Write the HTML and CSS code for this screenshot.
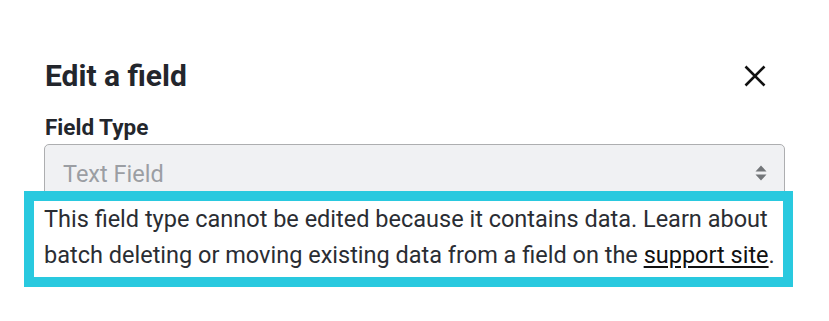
FILE: index.html
```
<!DOCTYPE html>
<html lang="en">
<head>
<meta charset="utf-8">
<title>Edit a field</title>
<link rel="stylesheet" href="styles.css">
</head>
<body>
<div class="modal">
  <div class="modal-header">
    <h2 class="modal-title">Edit a field</h2>
    <button class="close-btn" aria-label="Close">
      <svg width="22" height="22" viewBox="0 0 22 22"><path d="M1.5 1.5 L20.5 20.5 M20.5 1.5 L1.5 20.5" stroke="#111" stroke-width="2.6" stroke-linecap="butt" fill="none"/></svg>
    </button>
  </div>
  <label class="field-label">Field Type</label>
  <div class="select">
    <span class="select-value">Text Field</span>
    <svg class="select-arrows" width="12" height="16" viewBox="0 0 12 16"><path d="M6 0.5 L11.5 6.5 L0.5 6.5 Z M0.5 9.5 L11.5 9.5 L6 15.5 Z" fill="#737679"/></svg>
  </div>
  <p class="help">This field type cannot be edited because it contains data. Learn about batch deleting or moving existing data from a field on the <a href="#">support site</a>.</p>
</div>
</body>
</html>
```
FILE: styles.css
```
html, body {
  margin: 0;
  padding: 0;
  background: #ffffff;
}
body {
  font-family: Roboto, "Liberation Sans", sans-serif;
  color: #2a2d33;
}
.modal {
  width: 741px;
  padding: 58px 0 0 44px;
}
.modal-header {
  display: flex;
  align-items: center;
  justify-content: space-between;
  margin-left: 1px;
}
.modal-title {
  margin: 0;
  font-size: 30px;
  font-weight: 700;
  line-height: 36px;
  color: #23262c;
}
.close-btn {
  border: 0;
  background: none;
  padding: 0;
  margin-right: 19px;
  width: 22px;
  height: 22px;
  display: flex;
}
.field-label {
  display: block;
  margin: 19px 0 3px 1px;
  font-size: 22.5px;
  font-weight: 700;
  line-height: 28px;
  color: #23262c;
}
.select {
  box-sizing: border-box;
  height: 60px;
  border: 1px solid #adaeb0;
  border-radius: 5px;
  background: #f0f1f3;
  display: flex;
  align-items: center;
  justify-content: space-between;
  padding: 0 17px 0 18px;
}
.select-value {
  font-size: 23.5px;
  color: #9b9ea3;
  line-height: 28px;
  margin-top: 0px;
}
.select-arrows {
  display: block;
  margin-top: -3px;
}
.help {
  position: relative;
  box-sizing: border-box;
  width: 769px;
  margin: -13px 0 0 -20px;
  border: 10px solid #29c9df;
  background: #ffffff;
  padding: 0 4px 4px 10px;
  font-size: 23.5px;
  line-height: 36px;
  color: #2a2d33;
}
.help a {
  color: #111111;
  text-decoration: underline;
  text-underline-offset: 3px;
}
```
